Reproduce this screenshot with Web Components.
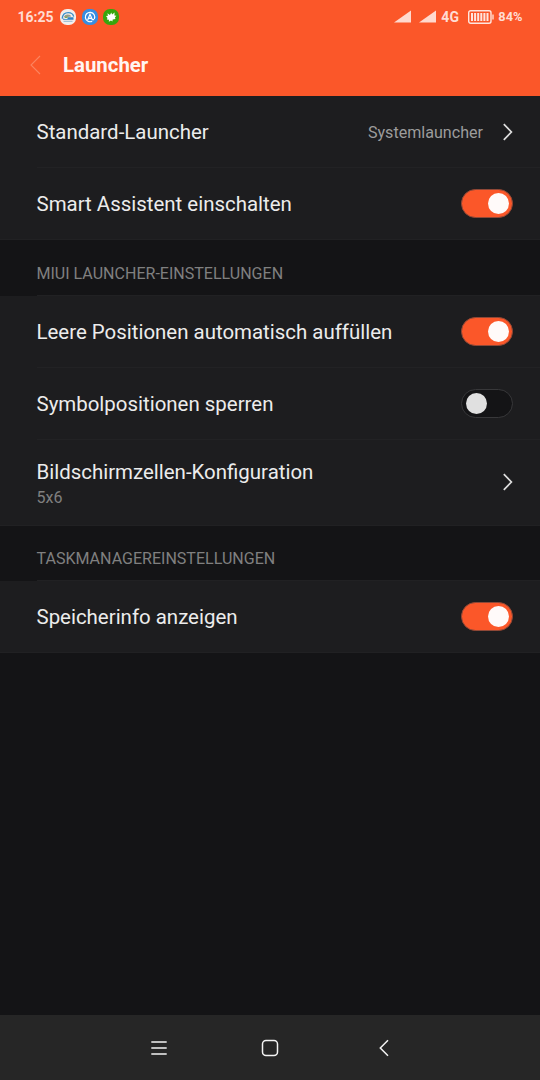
<!DOCTYPE html>
<html lang="de">
<head>
<meta charset="utf-8">
<title>Launcher</title>
<style>
    html, body {
        margin: 0;
        height: 100%;
        background: #141416;
        overflow: hidden;
    }
    body {
        font-family: Roboto, "Liberation Sans", sans-serif;
        color: #ececec;
    }
</style>
</head>
<body>

<settings-screen>
    <status-bar slot="top" time="16:25" network="4G" battery="84%"></status-bar>
    <title-bar slot="top">Launcher</title-bar>

    <settings-group>
        <settings-row>Standard-Launcher
            <span slot="value">Systemlauncher</span>
            <chevron-icon slot="action"></chevron-icon>
        </settings-row>
        <settings-row>Smart Assistent einschalten
            <toggle-switch slot="action" checked></toggle-switch>
        </settings-row>
    </settings-group>

    <settings-group heading="MIUI LAUNCHER-EINSTELLUNGEN" style="--heading-height: 56px">
        <settings-row>Leere Positionen automatisch auffüllen
            <toggle-switch slot="action" checked></toggle-switch>
        </settings-row>
        <settings-row>Symbolpositionen sperren
            <toggle-switch slot="action"></toggle-switch>
        </settings-row>
        <settings-row tall>Bildschirmzellen-Konfiguration
            <span slot="summary">5x6</span>
            <chevron-icon slot="action"></chevron-icon>
        </settings-row>
    </settings-group>

    <settings-group heading="TASKMANAGEREINSTELLUNGEN">
        <settings-row>Speicherinfo anzeigen
            <toggle-switch slot="action" checked></toggle-switch>
        </settings-row>
    </settings-group>

    <nav-bar slot="bottom"></nav-bar>
</settings-screen>

<script>
/** Base class: clones the markup of the subclass into an open shadow root. */
class BaseElement extends HTMLElement {
    constructor() {
        super();
        const template = document.createElement('template');
        template.innerHTML = this.constructor.markup;
        this.attachShadow({ mode: 'open' }).appendChild(template.content.cloneNode(true));
    }

    setText(selector, attribute) {
        this.shadowRoot.querySelector(selector).textContent = this.getAttribute(attribute) || '';
    }
}

class SettingsScreen extends BaseElement {
    static markup = `
        <style>
            :host {
                display: flex;
                flex-direction: column;
                height: 100vh;
            }
            header { background: #fb5729; height: 96px; }
            main { flex: 1; }
        </style>
        <header><slot name="top"></slot></header>
        <main><slot></slot></main>
        <slot name="bottom"></slot>
    `;
}

class StatusBar extends BaseElement {
    static markup = `
        <style>
            :host {
                display: flex;
                align-items: center;
                box-sizing: border-box;
                height: 33px;
                padding: 0 17.5px;
                color: #ffdcd2;
                font-size: 14px;
                font-weight: 700;
            }
            svg { display: block; flex: none; }
            .time { width: 42.5px; font-size: 14px; }
            .apps { display: flex; gap: 5.5px; flex: 1; }
            .signal { margin-right: 8px; }
            .signal + .signal { margin-right: 5px; }
            .network { width: 27px; }
            .percent { margin-left: 4px; font-size: 12.8px; }
        </style>
        <span class="time"></span>
        <span class="apps">
            <svg width="16" height="16" viewBox="0 0 16 16">
                <rect width="16" height="16" rx="7" fill="#f3eeec"/>
                <path d="M2.200 9.500C2.600 5.600 5 3.600 8.200 3.600c3 0 5 1.700 5.500 4" fill="none" stroke="#3a8fca" stroke-width="1.300"/>
                <path d="M3.700 8.600c.5-2 1.900-3 4-3s3 .8 3.500 2z" fill="#9a9d86"/>
                <path d="M2 8.800c2 1.600 3.500 1.300 5.500 1.300V8.300h6v2.500H3.200z" fill="#2f83c4"/>
                <path d="M3.500 12.300h9" stroke="#75a9cc" stroke-width=".8"/>
                <path d="M5 8.400h2.500" stroke="#6ca848" stroke-width="1"/>
            </svg>
            <svg width="16" height="16" viewBox="0 0 16 16">
                <rect width="16" height="16" rx="7" fill="#378de0"/>
                <path d="M10.200 12.200A4.700 4.700 0 1 1 12.300 10" fill="none" stroke="#fff" stroke-width="1.200"/>
                <path d="M5.700 10.900 8 5.300l2.300 5.300h1.800M6.600 9.300h2.800" fill="none" stroke="#fff" stroke-width="1.200"/>
            </svg>
            <svg width="16" height="16" viewBox="0 0 16 16">
                <rect width="16" height="16" rx="7" fill="#38a50d"/>
                <path d="M8.300 3.400 9.100 5.600l2.500-2.100-.2 3.100 2 .2-1.500 1.700.6 1.500-2.800.5-.3 2-1.400-1.100-2.200 1.400.2-2-2.200-.3.700-1.500L3 7.100l2-.4-.6-2.500L6.900 6z" fill="#fff"/>
            </svg>
        </span>
        <svg class="signal" width="17" height="13" viewBox="0 0 17 13"><path d="M0 12.500 17 .5v12z" fill="#ffd9ce"/></svg>
        <svg class="signal" width="17" height="13" viewBox="0 0 17 13"><path d="M0 12.500 17 .5v12z" fill="#ffd9ce"/></svg>
        <span class="network"></span>
        <svg width="26" height="14" viewBox="0 0 26 14">
            <rect x=".7" y=".7" width="22.300" height="12.600" rx="2" fill="none" stroke="#ffe6df" stroke-width="1.400"/>
            <path d="M4 3v8M7.100 3v8M10.200 3v8M13.300 3v8M16.400 3v8M19.500 3v8" stroke="#ffe6df" stroke-width="2"/>
            <path d="M25 4.500v5" stroke="#ffe6df" stroke-width="1.300"/>
        </svg>
        <span class="percent"></span>
    `;

    connectedCallback() {
        this.setText('.time', 'time');
        this.setText('.network', 'network');
        this.setText('.percent', 'battery');
    }
}

class TitleBar extends BaseElement {
    static markup = `
        <style>
            :host {
                display: flex;
                align-items: center;
                height: 63px;
                padding: 1px 0 0 30px;
                box-sizing: border-box;
                color: #fff5f2;
                font-size: 20.4px;
                font-weight: 700;
            }
            svg { width: 33px; height: 20px; }
        </style>
        <svg viewBox="0 0 33 20"><path d="M10 1 1 10l9 9" fill="none" stroke="#fc8460" stroke-width="1.100"/></svg>
        <slot></slot>
    `;
}

class SettingsGroup extends BaseElement {
    static markup = `
        <style>
            :host { display: block; }
            .heading {
                display: flex;
                align-items: flex-end;
                box-sizing: border-box;
                height: var(--heading-height, 55px);
                margin-left: 36.5px;
                padding-bottom: 11px;
                color: #808080;
                font-size: 16.05px;
                line-height: 20px;
                border-bottom: 1px solid #212123;
            }
            .heading:empty { display: none; }
            .rows {
                background: #1d1d1f;
                border-bottom: 1px solid #212123;
            }
        </style>
        <div class="heading"></div>
        <div class="rows"><slot></slot></div>
    `;

    connectedCallback() {
        this.setText('.heading', 'heading');
    }
}

class SettingsRow extends BaseElement {
    static markup = `
        <style>
            :host {
                display: flex;
                align-items: center;
                box-sizing: border-box;
                height: 72px;
                margin-left: 36.5px;
                padding-right: 27px;
                border-bottom: 1px solid #222224;
                font-size: 20.45px;
                line-height: 24px;
            }
            :host(:last-of-type) { border-bottom-color: transparent; height: 71px; }
            :host([tall]) { height: 85px; }
            .label { flex: 1; }
            :host(:last-of-type) .label { padding-top: 2px; }
            :host([tall]) .label { padding-top: 8px; }
            ::slotted([slot="value"]) {
                color: #9c9c9c;
                font-size: 16.1px;
                margin-right: 20px;
                padding-top: 2px;
            }
            ::slotted([slot="summary"]) {
                display: block;
                color: #808080;
                font-size: 16px;
                line-height: 28px;
            }
        </style>
        <div class="label"><slot></slot><slot name="summary"></slot></div>
        <slot name="value"></slot>
        <slot name="action"></slot>
    `;
}

class ToggleSwitch extends BaseElement {
    static markup = `
        <style>
            :host {
                display: flex;
                align-items: center;
                box-sizing: border-box;
                width: 52px;
                height: 29px;
                padding: 0 3.500px;
                border: 1px solid #38383a;
                border-radius: 15px;
                background: #141416;
            }
            :host([checked]) {
                justify-content: flex-end;
                border-color: #8f4837;
                background: #fb5729;
            }
            .knob {
                width: 21px;
                height: 21px;
                border-radius: 50%;
                background: #e0e0e0;
            }
            :host([checked]) .knob { background: #fffaf9; }
        </style>
        <div class="knob"></div>
    `;
}

class ChevronIcon extends BaseElement {
    static markup = `
        <style>
            :host { display: block; width: 10px; height: 18px; }
            svg { display: block; }
        </style>
        <svg width="10" height="18" viewBox="0 0 10 18">
            <path d="M.8 1.200 8.400 9 .8 16.800" fill="none" stroke="#dedede" stroke-width="1.700"/>
        </svg>
    `;
}

class NavBar extends BaseElement {
    static markup = `
        <style>
            :host {
                display: grid;
                grid-template-columns: 103px 111px 112px 115px 99px;
                align-items: center;
                justify-items: center;
                box-sizing: border-box;
                height: 65px;
                background: #262626;
            }
            svg { display: block; fill: none; stroke: #f4f4f4; stroke-width: 1.5; }
            .menu { grid-column: 2; }
        </style>
        <svg class="menu" width="16" height="18" viewBox="0 0 16 18"><path d="M.3 3h15.400M.3 9h15.400M.3 15h15.400"/></svg>
        <svg width="18" height="18" viewBox="0 0 18 18"><rect x="1.500" y="1.500" width="15" height="15" rx="3.500"/></svg>
        <svg width="10" height="18" viewBox="0 0 10 18"><path d="M9 1.200 1.300 9 9 16.800"/></svg>
    `;
}

customElements.define('settings-screen', SettingsScreen);
customElements.define('status-bar', StatusBar);
customElements.define('title-bar', TitleBar);
customElements.define('settings-group', SettingsGroup);
customElements.define('settings-row', SettingsRow);
customElements.define('toggle-switch', ToggleSwitch);
customElements.define('chevron-icon', ChevronIcon);
customElements.define('nav-bar', NavBar);
</script>
</body>
</html>
